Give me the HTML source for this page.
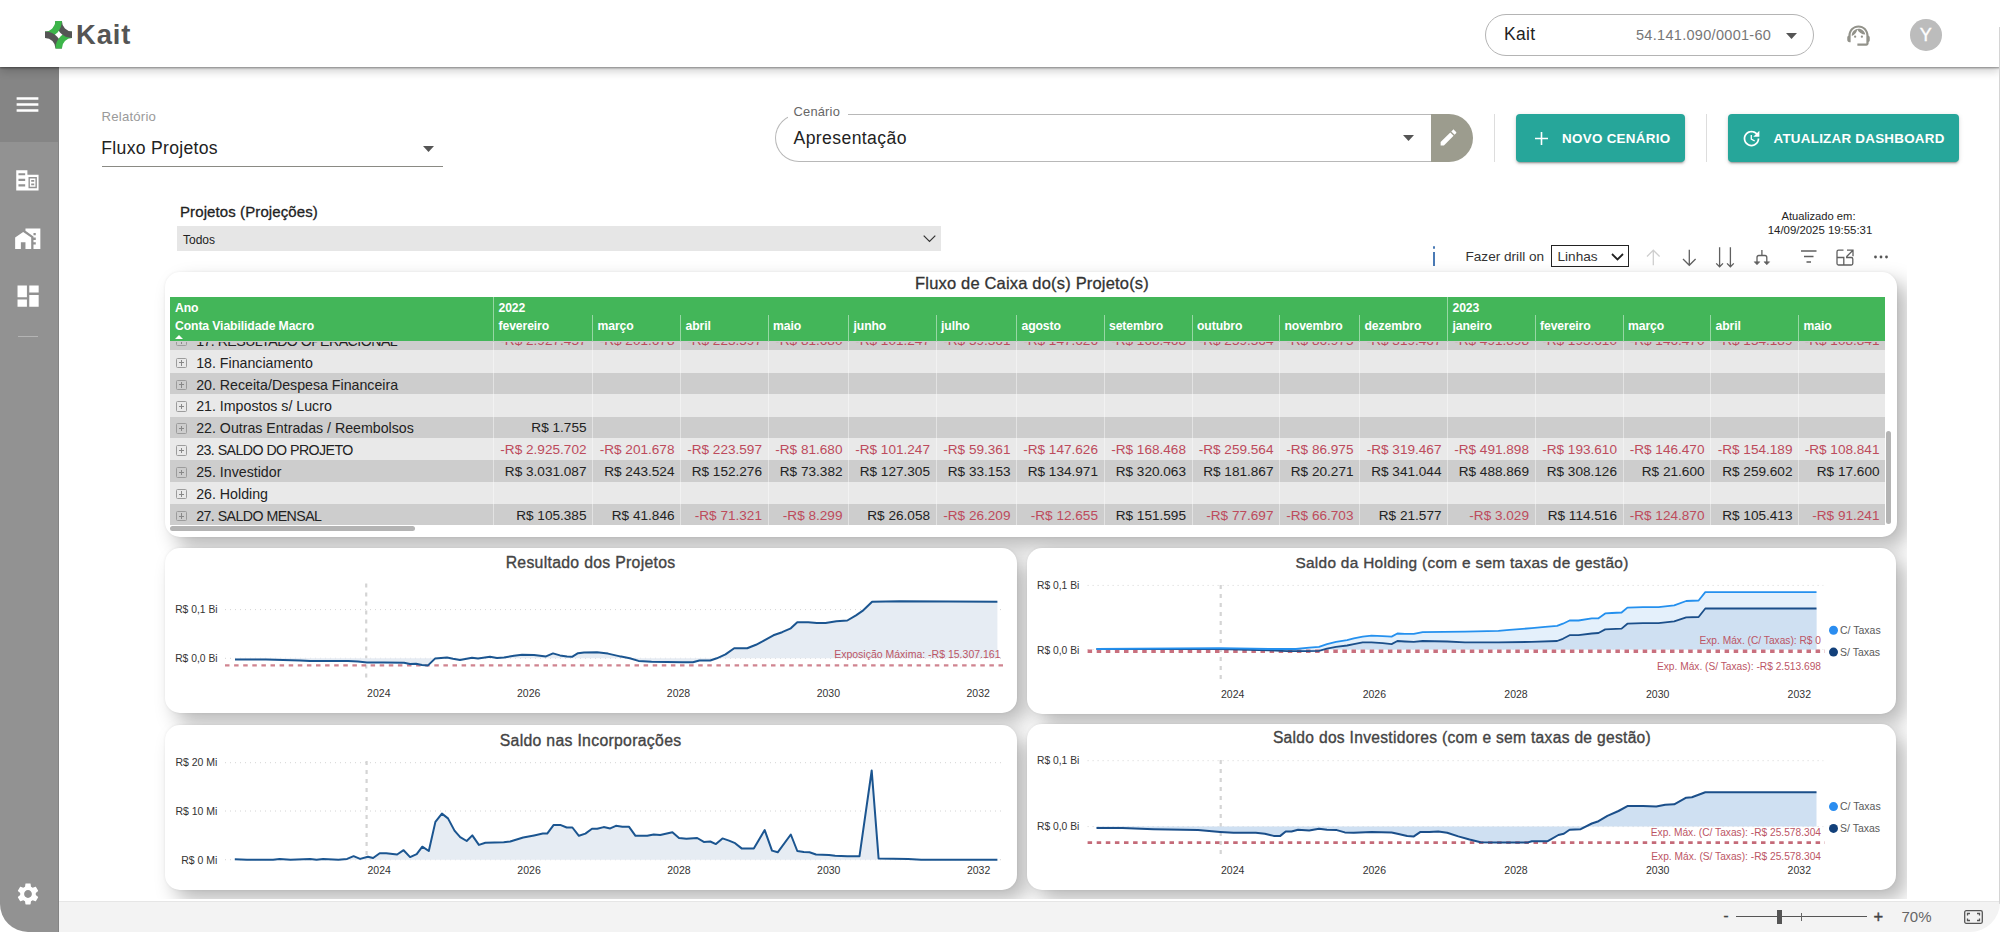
<!DOCTYPE html><html lang="pt-BR"><head><meta charset="utf-8"><title>Kait - Fluxo Projetos</title><style>
*{box-sizing:border-box}
html,body{margin:0;padding:0;background:#fff}
body{width:2000px;height:937px;overflow:hidden;position:relative;font-family:"Liberation Sans",sans-serif;color:#222}
.abs{position:absolute}
#app{position:absolute;left:0;top:0;width:2000px;height:932px;overflow:hidden;border-radius:0 0 30px 28px;background:#fff}
#hdr{position:absolute;left:0;top:0;width:2000px;height:67px;background:#fff;z-index:20;box-shadow:0 1px 2px rgba(0,0,0,.4),0 4px 9px rgba(0,0,0,.2)}
#side{position:absolute;left:0;top:67px;width:59px;height:865px;background:#929292;z-index:10;border-right:1px solid #848484}
#side .top{position:absolute;left:0;top:0;width:58px;height:75px;background:#858585}
#side svg{position:absolute;fill:#fff}
#foot{position:absolute;left:59px;top:901px;width:1941px;height:31px;background:#f3f3f3;border-top:1px solid #e6e6e6}
.t{position:absolute;white-space:nowrap;line-height:1}
.btn{position:absolute;top:114px;height:48px;background:#26a69a;border-radius:4px;box-shadow:0 3px 1px -2px rgba(0,0,0,.2),0 2px 2px 0 rgba(0,0,0,.14),0 1px 5px 0 rgba(0,0,0,.12);color:#fff}
.btn .t{font-weight:bold;font-size:13.4px;letter-spacing:.3px;top:17.500px}
.card{position:absolute;background:#fff;border-radius:15px;box-shadow:10px 10px 20px rgba(0,0,0,.28),0 0 3px rgba(0,0,0,.07)}
.row{position:absolute;left:0;width:1715px;height:21.86px}
.row .c{position:absolute;top:0;height:100%;text-align:right;padding-right:5.500px;font-size:13.6px;line-height:21.86px;white-space:nowrap;color:#222}
.row .l{position:absolute;left:26.200px;top:1px;font-size:14.2px;line-height:21.86px;white-space:nowrap;color:#222}
.row .x{position:absolute;left:6.200px;top:6.100px;width:10.500px;height:10.500px;border:1px solid #9c9c9c;border-radius:1.500px}
.row .x:before{content:"";position:absolute;left:1.500px;top:3.750px;width:5.500px;height:1px;background:#888}
.row .x:after{content:"";position:absolute;left:3.750px;top:1.500px;width:1px;height:5.500px;background:#888}
.n{color:#bd4b5c !important}
.hd{position:absolute;color:#fff;font-weight:bold;font-size:12.2px;white-space:nowrap;line-height:1;letter-spacing:-.1px}
svg text{font-family:"Liberation Sans",sans-serif}
</style></head><body><div id="app">
<div id="hdr">
<svg class="abs" style="left:44.5px;top:21.4px" width="27.4" height="27.4" viewBox="0 0 27.4 27.4" fill="none" stroke-width="6.4">
<path d="M13.7 0A13.7 13.7 0 0 1 0 13.7" stroke="#3db54a"/>
<path d="M0 13.7A13.7 13.7 0 0 1 13.7 27.4" stroke="#555"/>
<path d="M13.7 27.4A13.7 13.7 0 0 1 27.4 13.7" stroke="#3db54a"/>
<path d="M27.4 13.7A13.7 13.7 0 0 1 13.7 0" stroke="#555"/>
<path d="M13.7 0A13.7 13.7 0 0 1 9.7 9.7" stroke="#3db54a"/>
</svg>
<div class="t" style="left:76px;top:20.500px;font-size:27.4px;font-weight:bold;color:#555;letter-spacing:.85px">Kait</div>
<div class="abs" style="left:1485px;top:14px;width:329px;height:42px;border:1px solid #b4b4b4;border-radius:21px"></div>
<div class="t" style="left:1504px;top:25.5px;font-size:17.5px;color:#222;letter-spacing:.3px">Kait</div>
<div class="t" style="left:1636px;top:28px;font-size:14.5px;color:#777;letter-spacing:.3px">54.141.090/0001-60</div>
<svg class="abs" style="left:1785.5px;top:32.5px" width="11" height="6" viewBox="0 0 11 6"><path d="M0 0h11L5.5 6z" fill="#555"/></svg>
<svg class="abs" style="left:1845px;top:22px" width="27" height="27" viewBox="0 0 24 24" fill="#92928a">
<path d="M21 12.22C21 6.73 16.74 3 12 3c-4.69 0-9 3.65-9 9.28-.6.34-1 .98-1 1.72v2c0 1.1.9 2 2 2h1v-6.1c0-3.87 3.13-7 7-7s7 3.130 7 7V19h-8v2h8c1.1 0 2-.9 2-2v-1.220c.59-.31 1-.92 1-1.64v-2.300c0-.7-.41-1.310-1-1.620z"/>
<circle cx="9" cy="13" r="1"/><circle cx="15" cy="13" r="1"/>
<path d="M18 11.030C17.520 8.180 15.040 6 12.050 6c-3.030 0-6.290 2.510-6.030 6.450 2.470-1.010 4.330-3.210 4.860-5.890 1.310 2.630 4 4.440 7.120 4.470z"/>
</svg>
<div class="abs" style="left:1910px;top:19.200px;width:31.600px;height:31.600px;border-radius:50%;background:#bcbcbc"></div>
<div class="t" style="left:1910px;top:25.800px;width:31.600px;text-align:center;font-size:18px;color:#fff;-webkit-text-stroke:.35px #fff">Y</div>
</div>
<div class="abs" style="left:1999px;top:27px;width:1px;height:877px;background:#d4d4d4;z-index:30"></div>
<div id="side"><div class="top"></div>
<svg style="left:13.1px;top:22.5px" width="29" height="29" viewBox="0 0 24 24"><path d="M3 18h18v-2H3v2zm0-5h18v-2H3v2zm0-7v2h18V6H3z"/></svg>
<svg style="left:14.4px;top:100.4px" width="26.8" height="26.8" viewBox="0 0 24 24"><path fill-rule="evenodd" d="M2 3h10v4h10v14H2zM4 5.500h6v2H4zM4 10.500h6v2H4zM4 15.500h6v2H4zM13 9h7.500v10H13zM14.200 10.200h5v7.600h-5zM15.400 11.700h2.700v1.600h-2.700zM15.400 14.700h2.700v1.600h-2.700z"/></svg>
<svg style="left:13.8px;top:157.7px" width="27.5" height="27.5" viewBox="0 0 24 24"><path d="M1 11v10h5v-6h4v6h5V11L8 6z"/><path d="M10 3v1.970l7 5V11h2v2h-2v2h2v2h-2v4h6V3H10zm9 6h-2V7h2v2z"/></svg>
<svg style="left:13.7px;top:215.0px" width="28.2" height="28.2" viewBox="0 0 24 24"><path d="M3 13h8V3H3v10zm0 8h8v-6H3v6zm10 0h8V11h-8v10zm0-18v6h8V3h-8z"/></svg>
<div class="abs" style="left:17.5px;top:268.5px;width:20px;height:1px;background:#b4b4b4"></div>
<svg style="left:14.8px;top:813.5px" width="26" height="26" viewBox="0 0 24 24"><path d="M19.140 12.940c.04-.3.060-.610.060-.94 0-.320-.020-.640-.070-.94l2.030-1.580c.18-.14.230-.410.120-.610l-1.920-3.320c-.12-.220-.370-.290-.590-.220l-2.390.96c-.5-.38-1.030-.7-1.620-.94l-.36-2.540c-.04-.24-.24-.41-.48-.41h-3.840c-.24 0-.43.17-.47.41l-.36 2.540c-.59.24-1.130.57-1.620.94l-2.390-.96c-.22-.08-.47 0-.59.22L2.740 8.870c-.12.210-.08.470.12.610l2.030 1.580c-.05.3-.09.630-.09.940s.02.640.07.94l-2.030 1.580c-.18.14-.23.410-.12.610l1.920 3.320c.12.220.37.290.59.220l2.390-.96c.5.38 1.030.7 1.620.94l.36 2.540c.05.240.24.410.48.410h3.840c.24 0 .44-.17.470-.41l.36-2.540c.59-.24 1.130-.56 1.620-.94l2.390.96c.22.080.47 0 .59-.22l1.920-3.320c.12-.22.070-.47-.12-.61l-2.010-1.580zM12 15.600c-1.980 0-3.600-1.620-3.600-3.600s1.620-3.600 3.600-3.600 3.600 1.620 3.600 3.600-1.620 3.600-3.600 3.600z"/></svg>
</div>
<div id="foot">
<div class="t" style="left:1664.5px;top:5.500px;font-size:15px;color:#444;-webkit-text-stroke:.4px #444">-</div>
<div class="abs" style="left:1676.5px;top:14px;width:131px;height:1px;background:#555"></div>
<div class="abs" style="left:1717.5px;top:7.500px;width:5px;height:14px;background:#555"></div>
<div class="abs" style="left:1741.5px;top:10.500px;width:1px;height:8px;background:#666"></div>
<div class="t" style="left:1814.5px;top:5.500px;font-size:16.5px;color:#444;-webkit-text-stroke:.4px #444">+</div>
<div class="t" style="left:1842.5px;top:6.500px;font-size:15px;color:#666">70%</div>
<svg class="abs" style="left:1904.5px;top:7.500px" width="19" height="14" viewBox="0 0 19 14" fill="none" stroke="#555" stroke-width="1.3"><rect x=".7" y=".7" width="17.600" height="12.600" rx="1.5"/><path d="M3.500 5.500v-2h2.500M13 3.500h2.500v2M15.500 8.500v2H13M6 10.500H3.500v-2"/></svg>
</div>
<div class="t" style="left:101.5px;top:110.200px;font-size:13.2px;color:#9a9a9a;letter-spacing:.2px">Relatório</div>
<div class="t" style="left:101.300px;top:139.700px;font-size:17.6px;color:#222;letter-spacing:.3px">Fluxo Projetos</div>
<div class="abs" style="left:101.500px;top:165.600px;width:341px;height:1.500px;background:#8a8a84"></div>
<svg class="abs" style="left:422.5px;top:145.500px" width="11" height="6" viewBox="0 0 11 6"><path d="M0 0h11L5.5 6z" fill="#555"/></svg>
<div class="abs" style="left:775px;top:114px;width:656px;height:48px;border:1px solid #b8b8b8;border-right:none;border-radius:24px 0 0 24px"></div>
<div class="abs" style="left:787.500px;top:112px;width:60px;height:7px;background:#fff"></div>
<div class="t" style="left:793.5px;top:105.500px;font-size:12.9px;color:#666;letter-spacing:.2px">Cenário</div>
<div class="t" style="left:793.5px;top:130px;font-size:17.6px;color:#222;letter-spacing:.4px">Apresentação</div>
<svg class="abs" style="left:1403px;top:135px" width="11" height="6" viewBox="0 0 11 6"><path d="M0 0h11L5.5 6z" fill="#555"/></svg>
<div class="abs" style="left:1430.5px;top:114px;width:42.500px;height:48px;background:#9c9c8e;border-radius:0 24px 24px 0"></div>
<svg class="abs" style="left:1438px;top:127px;fill:#fff" width="21" height="21" viewBox="0 0 24 24"><path d="M3 17.250V21h3.750L17.810 9.940l-3.750-3.750L3 17.250zM20.710 7.040c.39-.39.39-1.020 0-1.410l-2.340-2.340c-.39-.39-1.020-.39-1.410 0l-1.830 1.830 3.750 3.750 1.830-1.830z"/></svg>
<div class="abs" style="left:1494px;top:114px;width:1px;height:48px;background:#ddd"></div>
<div class="abs" style="left:1706px;top:114px;width:1px;height:48px;background:#ddd"></div>
<div class="btn" style="left:1516px;width:169px"><svg class="abs" style="left:18.5px;top:17.5px" width="13" height="13" viewBox="0 0 13 13"><path d="M6.500 0v13M0 6.500h13" stroke="#fff" stroke-width="1.600"/></svg><div class="t" style="left:46px">NOVO CENÁRIO</div></div>
<div class="btn" style="left:1728px;width:231px"><svg class="abs" style="left:13px;top:13.5px;fill:#fff" width="21" height="21" viewBox="0 0 24 24"><path d="M11 8v5l4.250 2.520.77-1.280-3.520-2.090V8H11zm10 2V3l-2.640 2.640C16.740 4.010 14.490 3 12 3c-4.970 0-9 4.030-9 9s4.030 9 9 9 9-4.030 9-9h-2c0 3.860-3.140 7-7 7s-7-3.140-7-7 3.140-7 7-7c1.930 0 3.680.79 4.950 2.050L14 10h7z"/></svg><div class="t" style="left:45.500px;letter-spacing:.25px">ATUALIZAR DASHBOARD</div></div>
<div class="t" style="left:180px;top:204px;font-size:15px;color:#222;letter-spacing:.1px;-webkit-text-stroke:.3px #222">Projetos (Projeções)</div>
<div class="abs" style="left:177px;top:225.5px;width:763.5px;height:25px;background:#e6e6e6"></div>
<div class="t" style="left:183px;top:234px;font-size:12px;color:#222">Todos</div>
<svg class="abs" style="left:922.5px;top:235px" width="13" height="8" viewBox="0 0 13 8" fill="none" stroke="#333" stroke-width="1.2"><path d="M.7.7l5.800 5.800L12.300.7"/></svg>
<div class="t" style="left:1718.5px;top:210.500px;width:200px;text-align:center;font-size:11.2px;color:#222">Atualizado em:</div>
<div class="t" style="left:1720px;top:225px;width:200px;text-align:center;font-size:11.4px;color:#222">14/09/2025 19:55:31</div>
<div class="abs" style="left:1432.5px;top:246px;width:2.500px;height:2.500px;border-radius:50%;background:#4a7ab5"></div><div class="abs" style="left:1433px;top:251.500px;width:1.600px;height:14.500px;background:#4a7ab5"></div>
<div class="t" style="left:1465.5px;top:250px;font-size:13.6px;color:#333">Fazer drill on</div>
<div class="abs" style="left:1551px;top:245px;width:77.500px;height:21.500px;border:1px solid #222;background:#fff"></div>
<div class="t" style="left:1557.5px;top:250px;font-size:13.6px;color:#333">Linhas</div>
<svg class="abs" style="left:1610.5px;top:252.500px" width="13" height="8" viewBox="0 0 13 8" fill="none" stroke="#222" stroke-width="1.800"><path d="M1 1l5.500 5.500L12 1"/></svg>
<svg class="abs" style="left:1640px;top:244px" width="256" height="26" viewBox="1640 244 256 26" fill="none" stroke="#606060" stroke-width="1.3">
<path d="M1653.300 265.300V250.500M1647 256.500l6.300-6.300 6.300 6.300" stroke="#cfcfcf"/>
<path d="M1689.300 249.700v15M1683 259l6.300 6.300 6.300-6.300"/>
<path d="M1719.600 247.300v19.500M1716.200 263.400l3.400 3.400 3.400-3.400M1730.400 247.300v19.500M1727 263.400l3.400 3.400 3.400-3.400"/>
<path d="M1761.900 250v5.500M1757 263.500v-6a2 2 0 0 1 2-2h5.800a2 2 0 0 1 2 2v6"/>
<path d="M1754.200 261.800h5.600l-2.800 3zM1764 261.800h5.600l-2.800 3z" fill="#606060" stroke-width=".6"/>
<path d="M1801 251h15.500M1804 256.500h9.500M1806.500 262h4.500"/>
<path d="M1846 257.500h5.300a1.500 1.500 0 0 1 1.500 1.500v4.500a1.500 1.500 0 0 1-1.500 1.500h-12.800a1.500 1.500 0 0 1-1.500-1.500v-11.800a1.500 1.500 0 0 1 1.500-1.500h5M1837 257.500h6.800v7.500M1847 250.200h6v6M1853 250.200l-6.500 6.500"/>
<g fill="#555" stroke="none"><circle cx="1875.500" cy="257" r="1.400"/><circle cx="1881" cy="257" r="1.400"/><circle cx="1886.500" cy="257" r="1.400"/></g>
</svg>
<div class="abs" style="left:0;top:0;width:1907px;height:898.500px;overflow:hidden">
<div class="card" style="left:164.5px;top:272px;width:1732.500px;height:265px"></div>
<div class="card" style="left:164.500px;top:548px;width:852px;height:165px"></div>
<div class="card" style="left:1026.500px;top:548px;width:869.500px;height:165.500px"></div>
<div class="card" style="left:164.500px;top:724.500px;width:852px;height:165.500px"></div>
<div class="card" style="left:1026.500px;top:723.500px;width:869.500px;height:166px"></div>
</div>
<div class="t" style="left:832px;top:274.500px;width:400px;text-align:center;font-size:16.5px;letter-spacing:.18px;color:#333;-webkit-text-stroke:.3px #333">Fluxo de Caixa do(s) Projeto(s)</div>
<div class="abs" style="left:170px;top:297px;width:1714.5px;height:230px;overflow:hidden">
<div class="abs" style="left:0;top:43.800px;width:1714.5px;height:183.900px;overflow:hidden;background:#e9e9e9">
<div class="abs" style="left:0;top:-12.80px;width:1714.5px;height:22.00px;background:#cdcdcd"></div>
<div class="abs" style="left:0;top:31.90px;width:1714.5px;height:21.30px;background:#cdcdcd"></div>
<div class="abs" style="left:0;top:75.80px;width:1714.5px;height:21.40px;background:#cdcdcd"></div>
<div class="abs" style="left:0;top:119.50px;width:1714.5px;height:21.40px;background:#cdcdcd"></div>
<div class="abs" style="left:0;top:163.30px;width:1714.5px;height:20.50px;background:#cdcdcd"></div>
<div class="abs" style="left:323px;top:0;width:1px;height:184px;background:rgba(255,255,255,.42)"></div>
<div class="abs" style="left:422px;top:0;width:1px;height:184px;background:rgba(255,255,255,.42)"></div>
<div class="abs" style="left:510px;top:0;width:1px;height:184px;background:rgba(255,255,255,.42)"></div>
<div class="abs" style="left:597.5px;top:0;width:1px;height:184px;background:rgba(255,255,255,.42)"></div>
<div class="abs" style="left:678px;top:0;width:1px;height:184px;background:rgba(255,255,255,.42)"></div>
<div class="abs" style="left:765.5px;top:0;width:1px;height:184px;background:rgba(255,255,255,.42)"></div>
<div class="abs" style="left:846px;top:0;width:1px;height:184px;background:rgba(255,255,255,.42)"></div>
<div class="abs" style="left:933.5px;top:0;width:1px;height:184px;background:rgba(255,255,255,.42)"></div>
<div class="abs" style="left:1021.5px;top:0;width:1px;height:184px;background:rgba(255,255,255,.42)"></div>
<div class="abs" style="left:1109px;top:0;width:1px;height:184px;background:rgba(255,255,255,.42)"></div>
<div class="abs" style="left:1189px;top:0;width:1px;height:184px;background:rgba(255,255,255,.42)"></div>
<div class="abs" style="left:1277px;top:0;width:1px;height:184px;background:rgba(255,255,255,.42)"></div>
<div class="abs" style="left:1364.5px;top:0;width:1px;height:184px;background:rgba(255,255,255,.42)"></div>
<div class="abs" style="left:1452.5px;top:0;width:1px;height:184px;background:rgba(255,255,255,.42)"></div>
<div class="abs" style="left:1540px;top:0;width:1px;height:184px;background:rgba(255,255,255,.42)"></div>
<div class="abs" style="left:1628px;top:0;width:1px;height:184px;background:rgba(255,255,255,.42)"></div>
<div class="row" style="top:-11.01px"><span class="x"></span><span class="l" style="letter-spacing:-.55px">17. RESULTADO OPERACIONAL</span>
<span class="c n" style="left:323px;width:99px">-R$ 2.927.457</span>
<span class="c n" style="left:422px;width:88px">-R$ 201.678</span>
<span class="c n" style="left:510px;width:87.5px">-R$ 223.597</span>
<span class="c n" style="left:597.5px;width:80.5px">-R$ 81.680</span>
<span class="c n" style="left:678px;width:87.5px">-R$ 101.247</span>
<span class="c n" style="left:765.5px;width:80.5px">-R$ 59.361</span>
<span class="c n" style="left:846px;width:87.5px">-R$ 147.626</span>
<span class="c n" style="left:933.5px;width:88px">-R$ 168.468</span>
<span class="c n" style="left:1021.5px;width:87.5px">-R$ 259.564</span>
<span class="c n" style="left:1109px;width:80px">-R$ 86.975</span>
<span class="c n" style="left:1189px;width:88px">-R$ 319.467</span>
<span class="c n" style="left:1277px;width:87.5px">-R$ 491.898</span>
<span class="c n" style="left:1364.5px;width:88px">-R$ 193.610</span>
<span class="c n" style="left:1452.5px;width:87.5px">-R$ 146.470</span>
<span class="c n" style="left:1540px;width:88px">-R$ 154.189</span>
<span class="c n" style="left:1628px;width:87px">-R$ 108.841</span>
</div>
<div class="row" style="top:10.85px"><span class="x"></span><span class="l">18. Financiamento</span>
</div>
<div class="row" style="top:32.71px"><span class="x"></span><span class="l">20. Receita/Despesa Financeira</span>
</div>
<div class="row" style="top:54.57px"><span class="x"></span><span class="l">21. Impostos s/ Lucro</span>
</div>
<div class="row" style="top:76.43px"><span class="x"></span><span class="l">22. Outras Entradas / Reembolsos</span>
<span class="c" style="left:323px;width:99px">R$ 1.755</span>
</div>
<div class="row" style="top:98.29px"><span class="x"></span><span class="l" style="letter-spacing:-.55px">23. SALDO DO PROJETO</span>
<span class="c n" style="left:323px;width:99px">-R$ 2.925.702</span>
<span class="c n" style="left:422px;width:88px">-R$ 201.678</span>
<span class="c n" style="left:510px;width:87.5px">-R$ 223.597</span>
<span class="c n" style="left:597.5px;width:80.5px">-R$ 81.680</span>
<span class="c n" style="left:678px;width:87.5px">-R$ 101.247</span>
<span class="c n" style="left:765.5px;width:80.5px">-R$ 59.361</span>
<span class="c n" style="left:846px;width:87.5px">-R$ 147.626</span>
<span class="c n" style="left:933.5px;width:88px">-R$ 168.468</span>
<span class="c n" style="left:1021.5px;width:87.5px">-R$ 259.564</span>
<span class="c n" style="left:1109px;width:80px">-R$ 86.975</span>
<span class="c n" style="left:1189px;width:88px">-R$ 319.467</span>
<span class="c n" style="left:1277px;width:87.5px">-R$ 491.898</span>
<span class="c n" style="left:1364.5px;width:88px">-R$ 193.610</span>
<span class="c n" style="left:1452.5px;width:87.5px">-R$ 146.470</span>
<span class="c n" style="left:1540px;width:88px">-R$ 154.189</span>
<span class="c n" style="left:1628px;width:87px">-R$ 108.841</span>
</div>
<div class="row" style="top:120.15px"><span class="x"></span><span class="l">25. Investidor</span>
<span class="c" style="left:323px;width:99px">R$ 3.031.087</span>
<span class="c" style="left:422px;width:88px">R$ 243.524</span>
<span class="c" style="left:510px;width:87.5px">R$ 152.276</span>
<span class="c" style="left:597.5px;width:80.5px">R$ 73.382</span>
<span class="c" style="left:678px;width:87.5px">R$ 127.305</span>
<span class="c" style="left:765.5px;width:80.5px">R$ 33.153</span>
<span class="c" style="left:846px;width:87.5px">R$ 134.971</span>
<span class="c" style="left:933.5px;width:88px">R$ 320.063</span>
<span class="c" style="left:1021.5px;width:87.5px">R$ 181.867</span>
<span class="c" style="left:1109px;width:80px">R$ 20.271</span>
<span class="c" style="left:1189px;width:88px">R$ 341.044</span>
<span class="c" style="left:1277px;width:87.5px">R$ 488.869</span>
<span class="c" style="left:1364.5px;width:88px">R$ 308.126</span>
<span class="c" style="left:1452.5px;width:87.5px">R$ 21.600</span>
<span class="c" style="left:1540px;width:88px">R$ 259.602</span>
<span class="c" style="left:1628px;width:87px">R$ 17.600</span>
</div>
<div class="row" style="top:142.01px"><span class="x"></span><span class="l">26. Holding</span>
</div>
<div class="row" style="top:163.87px"><span class="x"></span><span class="l" style="letter-spacing:-.55px">27. SALDO MENSAL</span>
<span class="c" style="left:323px;width:99px">R$ 105.385</span>
<span class="c" style="left:422px;width:88px">R$ 41.846</span>
<span class="c n" style="left:510px;width:87.5px">-R$ 71.321</span>
<span class="c n" style="left:597.5px;width:80.5px">-R$ 8.299</span>
<span class="c" style="left:678px;width:87.5px">R$ 26.058</span>
<span class="c n" style="left:765.5px;width:80.5px">-R$ 26.209</span>
<span class="c n" style="left:846px;width:87.5px">-R$ 12.655</span>
<span class="c" style="left:933.5px;width:88px">R$ 151.595</span>
<span class="c n" style="left:1021.5px;width:87.5px">-R$ 77.697</span>
<span class="c n" style="left:1109px;width:80px">-R$ 66.703</span>
<span class="c" style="left:1189px;width:88px">R$ 21.577</span>
<span class="c n" style="left:1277px;width:87.5px">-R$ 3.029</span>
<span class="c" style="left:1364.5px;width:88px">R$ 114.516</span>
<span class="c n" style="left:1452.5px;width:87.5px">-R$ 124.870</span>
<span class="c" style="left:1540px;width:88px">R$ 105.413</span>
<span class="c n" style="left:1628px;width:87px">-R$ 91.241</span>
</div>
<div class="abs" style="left:0;top:0;width:1714.5px;height:1.300px;background:#cdcdcd"></div>
</div>
<div class="abs" style="left:0;top:0;width:1714.5px;height:43.700px;background:#43b659">
<div class="hd" style="left:5px;top:4.500px">Ano</div>
<div class="hd" style="left:5px;top:22.500px">Conta Viabilidade Macro</div>
<svg class="abs" style="left:5px;top:37.500px" width="8" height="4" viewBox="0 0 8 4"><path d="M0 4L4 0l4 4z" fill="#fff"/></svg>
<div class="abs" style="left:323px;top:0;width:1px;height:43.700px;background:rgba(255,255,255,.45)"></div>
<div class="hd" style="left:328.5px;top:4.500px">2022</div>
<div class="abs" style="left:1277px;top:0;width:1px;height:43.700px;background:rgba(255,255,255,.45)"></div>
<div class="hd" style="left:1282.5px;top:4.500px">2023</div>
<div class="hd" style="left:328.5px;top:22.500px">fevereiro</div>
<div class="abs" style="left:422px;top:18px;width:1px;height:25.700px;background:rgba(255,255,255,.45)"></div>
<div class="hd" style="left:427.5px;top:22.500px">março</div>
<div class="abs" style="left:510px;top:18px;width:1px;height:25.700px;background:rgba(255,255,255,.45)"></div>
<div class="hd" style="left:515.5px;top:22.500px">abril</div>
<div class="abs" style="left:597.5px;top:18px;width:1px;height:25.700px;background:rgba(255,255,255,.45)"></div>
<div class="hd" style="left:603px;top:22.500px">maio</div>
<div class="abs" style="left:678px;top:18px;width:1px;height:25.700px;background:rgba(255,255,255,.45)"></div>
<div class="hd" style="left:683.5px;top:22.500px">junho</div>
<div class="abs" style="left:765.5px;top:18px;width:1px;height:25.700px;background:rgba(255,255,255,.45)"></div>
<div class="hd" style="left:771px;top:22.500px">julho</div>
<div class="abs" style="left:846px;top:18px;width:1px;height:25.700px;background:rgba(255,255,255,.45)"></div>
<div class="hd" style="left:851.5px;top:22.500px">agosto</div>
<div class="abs" style="left:933.5px;top:18px;width:1px;height:25.700px;background:rgba(255,255,255,.45)"></div>
<div class="hd" style="left:939px;top:22.500px">setembro</div>
<div class="abs" style="left:1021.5px;top:18px;width:1px;height:25.700px;background:rgba(255,255,255,.45)"></div>
<div class="hd" style="left:1027px;top:22.500px">outubro</div>
<div class="abs" style="left:1109px;top:18px;width:1px;height:25.700px;background:rgba(255,255,255,.45)"></div>
<div class="hd" style="left:1114.5px;top:22.500px">novembro</div>
<div class="abs" style="left:1189px;top:18px;width:1px;height:25.700px;background:rgba(255,255,255,.45)"></div>
<div class="hd" style="left:1194.5px;top:22.500px">dezembro</div>
<div class="hd" style="left:1282.5px;top:22.500px">janeiro</div>
<div class="abs" style="left:1364.5px;top:18px;width:1px;height:25.700px;background:rgba(255,255,255,.45)"></div>
<div class="hd" style="left:1370px;top:22.500px">fevereiro</div>
<div class="abs" style="left:1452.5px;top:18px;width:1px;height:25.700px;background:rgba(255,255,255,.45)"></div>
<div class="hd" style="left:1458px;top:22.500px">março</div>
<div class="abs" style="left:1540px;top:18px;width:1px;height:25.700px;background:rgba(255,255,255,.45)"></div>
<div class="hd" style="left:1545.5px;top:22.500px">abril</div>
<div class="abs" style="left:1628px;top:18px;width:1px;height:25.700px;background:rgba(255,255,255,.45)"></div>
<div class="hd" style="left:1633.5px;top:22.500px">maio</div>
</div>
</div>
<div class="abs" style="left:170px;top:526px;width:245px;height:5px;border-radius:3px;background:#b4b4b4"></div>
<div class="abs" style="left:1886px;top:431px;width:5px;height:92.500px;border-radius:3px;background:#b4b4b4"></div>
<svg class="abs" style="left:0;top:540px" width="2000" height="360" viewBox="0 540 2000 360"><text x="590.6" y="567.5" font-size="15.8" fill="#444" text-anchor="middle" letter-spacing=".3" stroke="#444" stroke-width=".35">Resultado dos Projetos</text><line x1="225" y1="609.6" x2="1004" y2="609.6" stroke="#d4d4d4" stroke-width="1" stroke-dasharray="1 4"/><line x1="225" y1="658.32" x2="1004" y2="658.32" stroke="#d4d4d4" stroke-width="1" stroke-dasharray="1 4"/><line x1="366.2" y1="583.5" x2="366.2" y2="681.5" stroke="#d4d4d4" stroke-width="2.200" stroke-dasharray="4 5"/><path d="M235.0,658.3 L235.0,659.4 L266.0,659.6 L300.0,660.4 L310.0,661.0 L348.0,661.0 L358.0,661.6 L367.0,662.4 L384.0,662.4 L404.0,662.8 L410.0,664.0 L416.0,663.8 L422.0,665.0 L428.0,665.4 L435.0,658.6 L447.0,657.6 L453.0,658.8 L460.0,660.0 L472.0,657.8 L478.0,658.4 L490.0,656.8 L497.0,658.0 L504.0,657.4 L514.0,655.8 L522.0,654.8 L534.0,655.0 L546.0,656.4 L553.0,653.4 L560.0,655.4 L567.0,656.6 L572.0,656.8 L578.0,653.2 L584.0,652.4 L597.0,652.2 L608.0,653.6 L620.0,656.4 L621.1,656.6 L629.8,658.3 L638.5,660.9 L651.5,661.8 L682.0,662.2 L692.9,662.2 L699.4,660.5 L710.3,660.5 L716.8,658.3 L725.5,654.4 L734.2,648.3 L747.2,648.3 L756.0,644.8 L762.5,641.4 L773.4,635.3 L782.1,632.2 L790.8,628.3 L797.3,622.2 L808.2,622.2 L816.9,623.1 L825.6,623.1 L836.4,621.3 L847.3,620.5 L856.0,615.3 L862.5,610.9 L872.1,601.8 L899.5,601.3 L997.4,601.8 L997.4,658.3 Z" fill="#e6ecf3"/><line x1="225" y1="665.3" x2="1007" y2="665.3" stroke="#d08490" stroke-width="2.2" stroke-dasharray="4.500 4.600"/><polyline points="235.0,659.4 266.0,659.6 300.0,660.4 310.0,661.0 348.0,661.0 358.0,661.6 367.0,662.4 384.0,662.4 404.0,662.8 410.0,664.0 416.0,663.8 422.0,665.0 428.0,665.4 435.0,658.6 447.0,657.6 453.0,658.8 460.0,660.0 472.0,657.8 478.0,658.4 490.0,656.8 497.0,658.0 504.0,657.4 514.0,655.8 522.0,654.8 534.0,655.0 546.0,656.4 553.0,653.4 560.0,655.4 567.0,656.6 572.0,656.8 578.0,653.2 584.0,652.4 597.0,652.2 608.0,653.6 620.0,656.4 621.1,656.6 629.8,658.3 638.5,660.9 651.5,661.8 682.0,662.2 692.9,662.2 699.4,660.5 710.3,660.5 716.8,658.3 725.5,654.4 734.2,648.3 747.2,648.3 756.0,644.8 762.5,641.4 773.4,635.3 782.1,632.2 790.8,628.3 797.3,622.2 808.2,622.2 816.9,623.1 825.6,623.1 836.4,621.3 847.3,620.5 856.0,615.3 862.5,610.9 872.1,601.8 899.5,601.3 997.4,601.8" fill="none" stroke="#1b5590" stroke-width="2" stroke-linejoin="round"/><text x="175.2" y="613.3" font-size="10.3" fill="#333" text-anchor="start">R$ 0,1 Bi</text><text x="175.2" y="662" font-size="10.3" fill="#333" text-anchor="start">R$ 0,0 Bi</text><text x="378.8" y="697.2" font-size="10.5" fill="#333" text-anchor="middle">2024</text><text x="528.65" y="697.2" font-size="10.5" fill="#333" text-anchor="middle">2026</text><text x="678.5" y="697.2" font-size="10.5" fill="#333" text-anchor="middle">2028</text><text x="828.35" y="697.2" font-size="10.5" fill="#333" text-anchor="middle">2030</text><text x="978.2" y="697.2" font-size="10.5" fill="#333" text-anchor="middle">2032</text><text x="1000.5" y="658" font-size="10.5" fill="#bc5565" text-anchor="end">Exposição Máxima: -R$ 15.307.161</text><text x="590.6" y="745.5" font-size="15.8" fill="#444" text-anchor="middle" letter-spacing=".3" stroke="#444" stroke-width=".35">Saldo nas Incorporações</text><line x1="225" y1="762.7" x2="1004" y2="762.7" stroke="#d4d4d4" stroke-width="1" stroke-dasharray="1 4"/><line x1="225" y1="811" x2="1004" y2="811" stroke="#d4d4d4" stroke-width="1" stroke-dasharray="1 4"/><line x1="225" y1="859.725" x2="1004" y2="859.725" stroke="#d4d4d4" stroke-width="1" stroke-dasharray="1 4"/><line x1="366.6" y1="761" x2="366.6" y2="859" stroke="#d4d4d4" stroke-width="2.200" stroke-dasharray="4 5"/><path d="M234.8,859.7 L234.8,859.3 L247.0,859.7 L273.1,859.7 L279.6,858.9 L290.5,859.7 L310.1,858.9 L316.6,859.7 L323.1,858.9 L338.4,859.7 L347.1,858.9 L353.6,856.2 L360.1,858.9 L367.9,856.7 L373.1,858.0 L379.7,853.2 L386.2,853.2 L397.1,854.5 L403.6,850.2 L410.1,857.1 L416.7,854.1 L422.3,846.7 L428.8,851.0 L435.4,821.9 L441.9,813.6 L448.0,818.4 L454.5,830.6 L460.2,837.1 L466.7,841.0 L472.3,835.4 L478.9,844.9 L485.4,842.8 L503.7,842.3 L510.2,841.5 L523.2,837.5 L534.1,835.4 L542.8,833.6 L547.2,833.6 L553.7,824.9 L560.2,824.9 L566.7,827.5 L572.4,827.5 L578.9,835.8 L585.4,833.6 L592.0,828.8 L597.2,828.8 L603.7,827.1 L610.2,828.4 L615.9,825.8 L622.4,826.7 L628.9,826.7 L635.5,835.8 L647.2,835.8 L653.7,834.5 L660.2,834.9 L672.4,832.3 L679.0,838.0 L686.4,838.8 L697.2,838.0 L703.8,841.9 L710.3,841.5 L715.9,844.1 L722.5,838.4 L729.0,840.6 L735.1,843.2 L741.6,848.4 L753.8,848.4 L764.7,830.1 L772.0,850.6 L777.7,852.3 L790.8,834.5 L797.3,851.0 L803.8,851.9 L809.5,852.3 L816.0,854.5 L829.0,854.9 L835.1,855.8 L847.3,856.2 L859.5,856.2 L871.7,770.5 L878.6,858.4 L908.2,858.9 L921.2,859.7 L997.4,859.7 L997.4,859.7 Z" fill="#e6ecf3"/><polyline points="234.8,859.3 247.0,859.7 273.1,859.7 279.6,858.9 290.5,859.7 310.1,858.9 316.6,859.7 323.1,858.9 338.4,859.7 347.1,858.9 353.6,856.2 360.1,858.9 367.9,856.7 373.1,858.0 379.7,853.2 386.2,853.2 397.1,854.5 403.6,850.2 410.1,857.1 416.7,854.1 422.3,846.7 428.8,851.0 435.4,821.9 441.9,813.6 448.0,818.4 454.5,830.6 460.2,837.1 466.7,841.0 472.3,835.4 478.9,844.9 485.4,842.8 503.7,842.3 510.2,841.5 523.2,837.5 534.1,835.4 542.8,833.6 547.2,833.6 553.7,824.9 560.2,824.9 566.7,827.5 572.4,827.5 578.9,835.8 585.4,833.6 592.0,828.8 597.2,828.8 603.7,827.1 610.2,828.4 615.9,825.8 622.4,826.7 628.9,826.7 635.5,835.8 647.2,835.8 653.7,834.5 660.2,834.9 672.4,832.3 679.0,838.0 686.4,838.8 697.2,838.0 703.8,841.9 710.3,841.5 715.9,844.1 722.5,838.4 729.0,840.6 735.1,843.2 741.6,848.4 753.8,848.4 764.7,830.1 772.0,850.6 777.7,852.3 790.8,834.5 797.3,851.0 803.8,851.9 809.5,852.3 816.0,854.5 829.0,854.9 835.1,855.8 847.3,856.2 859.5,856.2 871.7,770.5 878.6,858.4 908.2,858.9 921.2,859.7 997.4,859.7" fill="none" stroke="#1b5590" stroke-width="2" stroke-linejoin="round"/><text x="217.4" y="766.4" font-size="10.5" fill="#333" text-anchor="end">R$ 20 Mi</text><text x="217.4" y="814.7" font-size="10.5" fill="#333" text-anchor="end">R$ 10 Mi</text><text x="217.4" y="864.3" font-size="10.5" fill="#333" text-anchor="end">R$ 0 Mi</text><text x="379.2" y="874.3" font-size="10.5" fill="#333" text-anchor="middle">2024</text><text x="529.05" y="874.3" font-size="10.5" fill="#333" text-anchor="middle">2026</text><text x="678.9" y="874.3" font-size="10.5" fill="#333" text-anchor="middle">2028</text><text x="828.75" y="874.3" font-size="10.5" fill="#333" text-anchor="middle">2030</text><text x="978.6" y="874.3" font-size="10.5" fill="#333" text-anchor="middle">2032</text><text x="1462" y="568" font-size="15.4" fill="#444" text-anchor="middle" letter-spacing=".3" stroke="#444" stroke-width=".35">Saldo da Holding (com e sem taxas de gestão)</text><line x1="1087.6" y1="585.4" x2="1823.3" y2="585.4" stroke="#d4d4d4" stroke-width="1" stroke-dasharray="1 4"/><line x1="1087.6" y1="649.47" x2="1823.3" y2="649.47" stroke="#d4d4d4" stroke-width="1" stroke-dasharray="1 4"/><line x1="1220.7" y1="585" x2="1220.7" y2="681.5" stroke="#d4d4d4" stroke-width="2.200" stroke-dasharray="4 5"/><path d="M1096.5,649.5 L1096.5,649.0 L1220.2,648.1 L1269.2,649.0 L1295.9,649.0 L1309.2,647.7 L1319.0,646.8 L1327.0,644.1 L1336.0,641.9 L1347.1,640.1 L1353.8,638.3 L1362.7,636.6 L1371.5,635.7 L1382.7,636.1 L1391.6,636.6 L1397.4,633.5 L1404.9,633.9 L1413.8,633.9 L1422.7,632.1 L1465.0,631.7 L1498.4,630.8 L1509.5,629.9 L1531.8,628.1 L1545.1,626.8 L1557.1,625.9 L1562.9,623.7 L1569.6,620.5 L1578.5,620.5 L1591.8,618.3 L1598.5,618.3 L1605.2,613.4 L1611.8,613.0 L1621.6,612.5 L1627.4,607.6 L1643.0,607.2 L1658.6,607.2 L1674.2,605.4 L1686.2,601.0 L1698.6,600.5 L1705.3,592.1 L1816.5,592.1 L1816.5,649.5 Z" fill="#e4f0fb"/><path d="M1096.5,649.5 L1096.5,649.0 L1220.2,649.0 L1269.2,650.4 L1287.0,651.2 L1304.8,651.2 L1319.0,650.8 L1327.0,648.6 L1336.0,646.8 L1347.1,645.5 L1353.8,644.1 L1362.7,642.4 L1371.5,642.4 L1382.7,643.2 L1391.6,644.1 L1397.4,641.0 L1404.9,641.5 L1413.8,641.9 L1422.7,641.0 L1447.2,641.5 L1465.0,642.4 L1498.4,642.4 L1531.8,641.9 L1557.1,641.0 L1562.9,638.8 L1569.6,635.2 L1578.5,635.2 L1591.8,633.5 L1598.5,633.0 L1605.2,629.4 L1621.6,628.6 L1627.4,623.7 L1643.0,623.2 L1658.6,623.2 L1674.2,621.4 L1686.2,617.4 L1698.6,617.0 L1705.3,608.5 L1816.5,608.5 L1816.5,649.5 Z" fill="#cfe0f2"/><line x1="1087.6" y1="651.3" x2="1825" y2="651.3" stroke="#c9707e" stroke-width="3.4" stroke-dasharray="4.500 4.600"/><polyline points="1096.5,649.0 1220.2,649.0 1269.2,650.4 1287.0,651.2 1304.8,651.2 1319.0,650.8 1327.0,648.6 1336.0,646.8 1347.1,645.5 1353.8,644.1 1362.7,642.4 1371.5,642.4 1382.7,643.2 1391.6,644.1 1397.4,641.0 1404.9,641.5 1413.8,641.9 1422.7,641.0 1447.2,641.5 1465.0,642.4 1498.4,642.4 1531.8,641.9 1557.1,641.0 1562.9,638.8 1569.6,635.2 1578.5,635.2 1591.8,633.5 1598.5,633.0 1605.2,629.4 1621.6,628.6 1627.4,623.7 1643.0,623.2 1658.6,623.2 1674.2,621.4 1686.2,617.4 1698.6,617.0 1705.3,608.5 1816.5,608.5" fill="none" stroke="#1b4f8a" stroke-width="1.800" stroke-linejoin="round"/><polyline points="1096.5,649.0 1220.2,648.1 1269.2,649.0 1295.9,649.0 1309.2,647.7 1319.0,646.8 1327.0,644.1 1336.0,641.9 1347.1,640.1 1353.8,638.3 1362.7,636.6 1371.5,635.7 1382.7,636.1 1391.6,636.6 1397.4,633.5 1404.9,633.9 1413.8,633.9 1422.7,632.1 1465.0,631.7 1498.4,630.8 1509.5,629.9 1531.8,628.1 1545.1,626.8 1557.1,625.9 1562.9,623.7 1569.6,620.5 1578.5,620.5 1591.8,618.3 1598.5,618.3 1605.2,613.4 1611.8,613.0 1621.6,612.5 1627.4,607.6 1643.0,607.2 1658.6,607.2 1674.2,605.4 1686.2,601.0 1698.6,600.5 1705.3,592.1 1816.5,592.1" fill="none" stroke="#2490ee" stroke-width="1.800" stroke-linejoin="round"/><text x="1037" y="589.1" font-size="10.3" fill="#333" text-anchor="start">R$ 0,1 Bi</text><text x="1037" y="654.1" font-size="10.3" fill="#333" text-anchor="start">R$ 0,0 Bi</text><text x="1232.7" y="698.1" font-size="10.5" fill="#333" text-anchor="middle">2024</text><text x="1374.35" y="698.1" font-size="10.5" fill="#333" text-anchor="middle">2026</text><text x="1516" y="698.1" font-size="10.5" fill="#333" text-anchor="middle">2028</text><text x="1657.65" y="698.1" font-size="10.5" fill="#333" text-anchor="middle">2030</text><text x="1799.3" y="698.1" font-size="10.5" fill="#333" text-anchor="middle">2032</text><text x="1821" y="643.6" font-size="10.2" fill="#bc5565" text-anchor="end">Exp. Máx. (C/ Taxas): R$ 0</text><text x="1821" y="670" font-size="10.2" fill="#bc5565" text-anchor="end">Exp. Máx. (S/ Taxas): -R$ 2.513.698</text><circle cx="1833.500" cy="630.300" r="4.500" fill="#2a8df0"/><text x="1840" y="634" font-size="10.5" fill="#5a5a5a" text-anchor="start">C/ Taxas</text><circle cx="1833.500" cy="652.100" r="4.500" fill="#12407a"/><text x="1840" y="655.8" font-size="10.5" fill="#5a5a5a" text-anchor="start">S/ Taxas</text><text x="1462" y="743" font-size="15.6" fill="#444" text-anchor="middle" letter-spacing=".3" stroke="#444" stroke-width=".35">Saldo dos Investidores (com e sem taxas de gestão)</text><line x1="1087.6" y1="760.7" x2="1823.3" y2="760.7" stroke="#d4d4d4" stroke-width="1" stroke-dasharray="1 4"/><line x1="1087.6" y1="826.58" x2="1823.3" y2="826.58" stroke="#d4d4d4" stroke-width="1" stroke-dasharray="1 4"/><line x1="1220.7" y1="760" x2="1220.7" y2="856" stroke="#d4d4d4" stroke-width="2.200" stroke-dasharray="4 5"/><path d="M1096.5,826.6 L1096.5,827.9 L1122.3,827.9 L1153.5,829.2 L1198.0,830.1 L1220.2,831.9 L1233.6,832.8 L1255.8,832.8 L1264.8,833.7 L1273.7,835.9 L1280.3,835.9 L1285.7,831.5 L1291.5,831.5 L1298.1,829.7 L1309.2,830.6 L1319.0,828.8 L1327.0,829.7 L1336.8,830.1 L1344.8,832.4 L1353.8,832.8 L1371.5,831.9 L1391.6,832.4 L1397.4,833.7 L1407.2,835.9 L1413.8,836.4 L1420.5,831.9 L1429.4,831.9 L1438.3,831.5 L1447.2,832.8 L1458.3,836.4 L1469.5,839.5 L1480.6,842.2 L1496.2,842.6 L1527.3,842.6 L1531.8,841.3 L1547.3,841.3 L1558.4,835.0 L1563.8,833.7 L1569.6,829.7 L1580.7,829.2 L1591.8,823.5 L1598.5,821.2 L1607.4,815.9 L1618.5,811.0 L1627.4,806.1 L1643.0,806.1 L1656.3,806.6 L1665.2,804.8 L1674.2,804.3 L1686.2,797.7 L1691.9,797.2 L1705.3,792.3 L1816.5,792.3 L1816.5,826.6 Z" fill="#cfe0f2"/><line x1="1087.6" y1="842.6" x2="1825" y2="842.6" stroke="#c46a78" stroke-width="2.6" stroke-dasharray="4.500 4.600"/><polyline points="1096.5,827.9 1122.3,827.9 1153.5,829.2 1198.0,830.1 1220.2,831.9 1233.6,832.8 1255.8,832.8 1264.8,833.7 1273.7,835.9 1280.3,835.9 1285.7,831.5 1291.5,831.5 1298.1,829.7 1309.2,830.6 1319.0,828.8 1327.0,829.7 1336.8,830.1 1344.8,832.4 1353.8,832.8 1371.5,831.9 1391.6,832.4 1397.4,833.7 1407.2,835.9 1413.8,836.4 1420.5,831.9 1429.4,831.9 1438.3,831.5 1447.2,832.8 1458.3,836.4 1469.5,839.5 1480.6,842.2 1496.2,842.6 1527.3,842.6 1531.8,841.3 1547.3,841.3 1558.4,835.0 1563.8,833.7 1569.6,829.7 1580.7,829.2 1591.8,823.5 1598.5,821.2 1607.4,815.9 1618.5,811.0 1627.4,806.1 1643.0,806.1 1656.3,806.6 1665.2,804.8 1674.2,804.3 1686.2,797.7 1691.9,797.2 1705.3,792.3 1816.5,792.3" fill="none" stroke="#1b4f8a" stroke-width="2" stroke-linejoin="round"/><text x="1037" y="764.4" font-size="10.3" fill="#333" text-anchor="start">R$ 0,1 Bi</text><text x="1037" y="830.3" font-size="10.3" fill="#333" text-anchor="start">R$ 0,0 Bi</text><text x="1232.7" y="873.5" font-size="10.5" fill="#333" text-anchor="middle">2024</text><text x="1374.35" y="873.5" font-size="10.5" fill="#333" text-anchor="middle">2026</text><text x="1516" y="873.5" font-size="10.5" fill="#333" text-anchor="middle">2028</text><text x="1657.65" y="873.5" font-size="10.5" fill="#333" text-anchor="middle">2030</text><text x="1799.3" y="873.5" font-size="10.5" fill="#333" text-anchor="middle">2032</text><text x="1821" y="836" font-size="10.2" fill="#bc5565" text-anchor="end">Exp. Máx. (C/ Taxas): -R$ 25.578.304</text><text x="1821" y="859.6" font-size="10.2" fill="#bc5565" text-anchor="end">Exp. Máx. (S/ Taxas): -R$ 25.578.304</text><circle cx="1833.500" cy="806.600" r="4.500" fill="#2a8df0"/><text x="1840" y="810.3" font-size="10.5" fill="#5a5a5a" text-anchor="start">C/ Taxas</text><circle cx="1833.500" cy="828.400" r="4.500" fill="#12407a"/><text x="1840" y="832.1" font-size="10.5" fill="#5a5a5a" text-anchor="start">S/ Taxas</text></svg>
</div></body></html>
